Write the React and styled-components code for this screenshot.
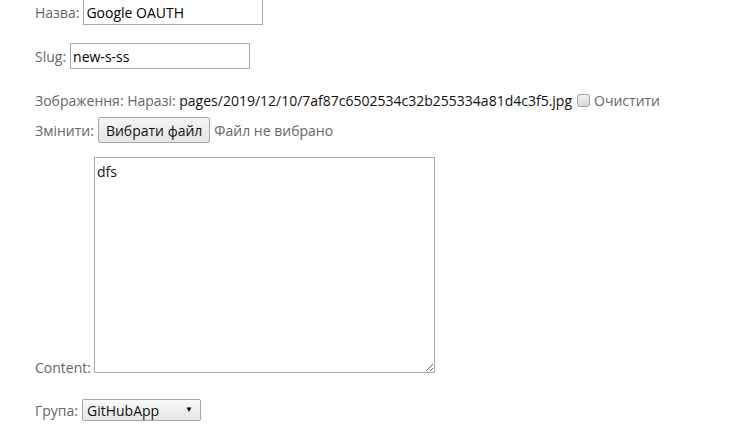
import React from "react";
import styled, { createGlobalStyle } from "styled-components";

const Global = createGlobalStyle`
  html, body { margin: 0; padding: 0; background: #fff; }
  body { font-family: "Open Sans", "Liberation Sans", sans-serif; }
`;

const Form = styled.form`
  display: flex;
  flex-direction: column;
  padding: 0 0 0 35px;
  margin-top: -1px;
  font-size: 14px;
  color: #666;
`;

const Row = styled.div`
  display: flex;
  align-items: center;
  gap: ${(p) => p.$gap ?? 4}px;
  margin-top: ${(p) => p.$mt ?? 0}px;
  line-height: 19px;
`;

const FlowRow = styled.div`
  margin-top: ${(p) => p.$mt ?? 0}px;
  line-height: 19px;
  white-space: nowrap;
`;

const Label = styled.span`
  color: #666;
  white-space: nowrap;
`;

const Value = styled.span`
  color: #111;
  white-space: nowrap;
`;

const TextInput = styled.input`
  box-sizing: border-box;
  width: 180px;
  height: 26px;
  border: 1px solid #a9a9a9;
  padding: 0 2px;
  font-family: inherit;
  font-size: 14px;
  color: #000;
  outline: none;
`;

const Check = styled.input`
  appearance: none;
  -webkit-appearance: none;
  box-sizing: border-box;
  margin: 0 4px 0 5px;
  width: 13px;
  height: 13px;
  border: 1px solid #a0a0a0;
  border-radius: 3px;
  background: linear-gradient(#f2f2f2, #d8d8d8);
  vertical-align: -1px;
`;

const FileButton = styled.span`
  box-sizing: border-box;
  display: inline-flex;
  align-items: center;
  height: 26px;
  padding: 0 7px;
  border: 1px solid #a6a6a6;
  border-radius: 2px;
  background: linear-gradient(#f5f5f5, #e4e4e4);
  color: #111;
  font-size: 14px;
`;

const TextArea = styled.textarea`
  box-sizing: border-box;
  width: 341px;
  height: 216px;
  margin-left: 3px;
  border: 1px solid #a9a9a9;
  padding: 4px 2px;
  font-family: inherit;
  font-size: 14px;
  color: #111;
  vertical-align: baseline;
  outline: none;
  resize: both;
`;

const SelectWrap = styled.span`
  position: relative;
  display: inline-block;
`;

const Select = styled.select`
  box-sizing: border-box;
  appearance: none;
  -webkit-appearance: none;
  width: 119px;
  height: 22px;
  padding: 0 20px 0 4px;
  border: 1px solid #a6a6a6;
  border-radius: 2px;
  background: linear-gradient(#fafafa, #e6e6e6);
  font-family: inherit;
  font-size: 14px;
  color: #111;
  outline: none;
`;

const Arrow = styled.span`
  position: absolute;
  right: 8px;
  top: 5px;
  font-size: 8px;
  line-height: 10px;
  color: #000;
  pointer-events: none;
`;

export default function App() {
  return (
    <>
      <Global />
      <Form onSubmit={(e) => e.preventDefault()}>
        <Row>
          <Label>Назва:</Label>
          <TextInput defaultValue="Google OAUTH" />
        </Row>
        <Row $mt={18}>
          <Label>Slug:</Label>
          <TextInput defaultValue="new-s-ss" />
        </Row>
        <FlowRow $mt={22}>
          <Label>Зображення: Наразі: </Label>
          <Value>pages/2019/12/10/7af87c6502534c32b255334a81d4c3f5.jpg</Value>
          <Check type="checkbox" />
          <Label>Очистити</Label>
        </FlowRow>
        <Row $mt={7} $gap={4}>
          <Label>Змінити:</Label>
          <FileButton>Вибрати файл</FileButton>
          <Label>Файл не вибрано</Label>
        </Row>
        <FlowRow $mt={14}>
          <Label>Content:</Label>
          <TextArea defaultValue="dfs" />
        </FlowRow>
        <Row $mt={22}>
          <Label>Група:</Label>
          <SelectWrap>
            <Select defaultValue="GitHubApp">
              <option>GitHubApp</option>
            </Select>
            <Arrow>▼</Arrow>
          </SelectWrap>
        </Row>
      </Form>
    </>
  );
}
